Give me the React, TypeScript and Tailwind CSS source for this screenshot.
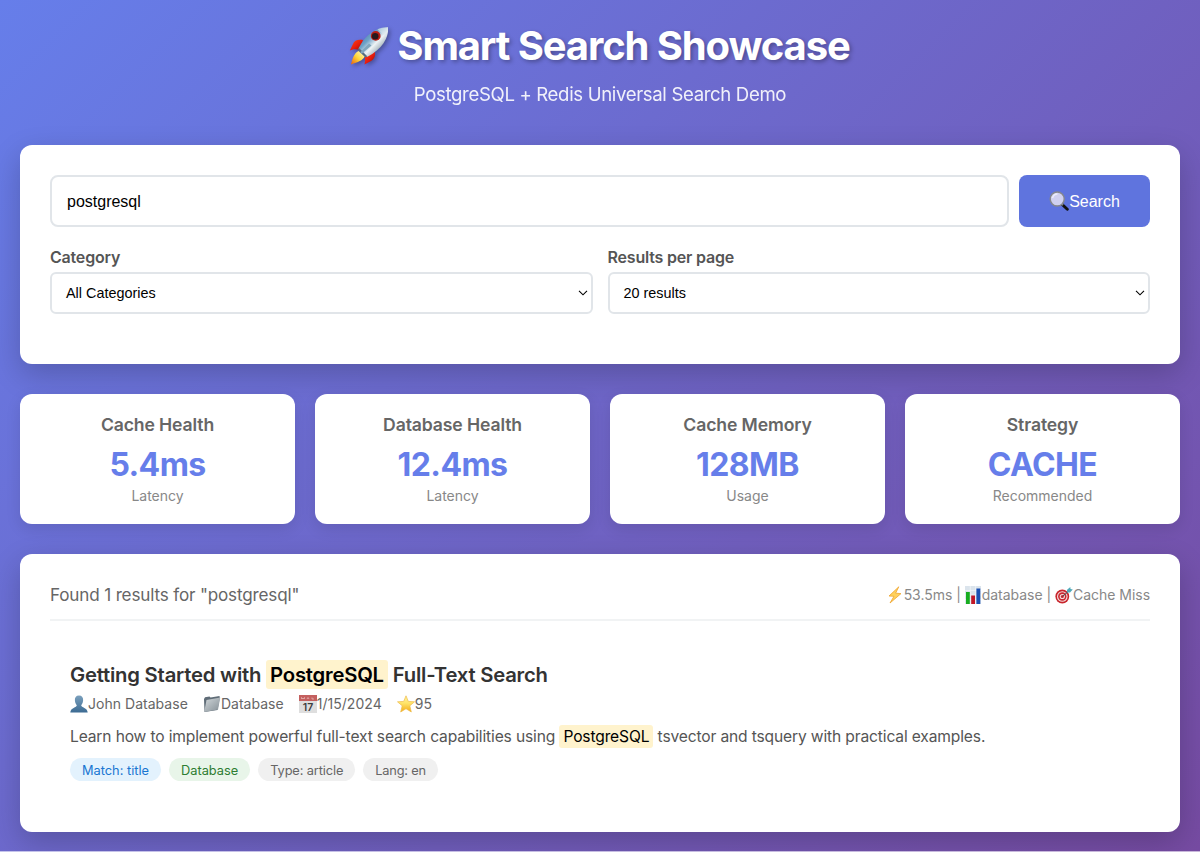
import React from "react";

type IconProps = { className?: string };

function Rocket({ className }: IconProps) {
  return (
    <svg viewBox="0 0 40 40" className={className}>
      <defs>
        <linearGradient id="rk-body" x1="0" y1="0" x2="1" y2="1">
          <stop offset="0" stopColor="#2f6396" />
          <stop offset=".38" stopColor="#6fa3c8" />
          <stop offset=".56" stopColor="#eef3f5" />
          <stop offset=".72" stopColor="#a9b7bf" />
          <stop offset="1" stopColor="#4d5f6c" />
        </linearGradient>
        <linearGradient id="rk-fire" x1="1" y1="0" x2="0" y2="1">
          <stop offset="0" stopColor="#fffbd0" />
          <stop offset=".5" stopColor="#ffd83a" />
          <stop offset="1" stopColor="#e85f0c" />
        </linearGradient>
        <linearGradient id="rk-fin" x1="0" y1="0" x2="1" y2="1">
          <stop offset="0" stopColor="#ff4a1c" />
          <stop offset=".55" stopColor="#e61b0e" />
          <stop offset="1" stopColor="#7d1010" />
        </linearGradient>
      </defs>
      <path d="M14 14 C9 13 5 14.500 4 18 L.8 24.500 C5 22.500 8 23 11 24 Z" fill="url(#rk-fin)" />
      <path d="M25.500 25 C27 29 25.500 33 22 35 L15.500 38.500 C16.500 34 16 31.500 15.200 29 Z" fill="url(#rk-fin)" />
      <path d="M39 1.200 C40 12 33 23 18 31 C14 30 11 27 9.500 22.500 C16 9 26 1.500 39 1.200 Z" fill="url(#rk-body)" />
      <path d="M39 1.200 C34 1.200 31 2 28.500 3.300 L37 11 C38.500 8 39.300 5 39 1.200Z" fill="#dce8ec" opacity=".6" />
      <path d="M10 22 L18.500 30.600 L15.500 31.500 L8.800 25Z" fill="#586e80" />
      <path d="M9.500 25 L15.500 30.500 C14 34.500 9 36 2 38.500 C3 34 5 27 9.500 25 Z" fill="url(#rk-fire)" />
      <circle cx="26.700" cy="9.900" r="4.900" fill="#b71c14" />
      <circle cx="26.200" cy="10.200" r="3.300" fill="#26181c" />
      <path d="M20 17.500 L22.500 19.500 L12.500 28 L11.500 26 Z" fill="#7fa6bd" />
    </svg>
  );
}

function Magnifier({ className }: IconProps) {
  return (
    <svg viewBox="0 0 20 20" className={className}>
      <path d="M13.500 13.800 L18.300 18.300" stroke="#111" strokeWidth="2.900" strokeLinecap="round" />
      <path d="M12.200 12.500 L14 14.200" stroke="#8a8a8a" strokeWidth="1.800" />
      <circle cx="8.200" cy="8" r="7" fill="#cfd0f0" stroke="#85878c" strokeWidth="1.400" />
      <path d="M3.600 7.200 A5 5 0 0 1 8.400 3" fill="none" stroke="#eceefb" strokeWidth="1.400" />
    </svg>
  );
}

function Bolt({ className }: IconProps) {
  return (
    <svg viewBox="0 0 14 18" className={className}>
      <path d="M10.800 .8 L1 10 L6 10.300 L2 17 L13 7.600 L7.600 7.200 Z" fill="#ffd15c" stroke="#efa52f" strokeWidth=".8" strokeLinejoin="round" />
    </svg>
  );
}

function Chart({ className }: IconProps) {
  return (
    <svg viewBox="0 0 16 18" className={className}>
      <rect width="16" height="18" fill="#dbe4ec" />
      <path d="M0 4.500H16M0 9H16M0 13.500H16M5.300 0V18M10.600 0V18" stroke="#f6f9fb" strokeWidth=".6" />
      <rect x="1" y="6" width="3.800" height="12" fill="#18ad20" />
      <rect x="6.200" y="9.500" width="3.800" height="8.500" fill="#c21727" />
      <rect x="11.400" y="2.500" width="3.900" height="15.500" fill="#1c51b3" />
    </svg>
  );
}

function Target({ className }: IconProps) {
  return (
    <svg viewBox="0 0 18 18" className={className}>
      <circle cx="7.300" cy="10.500" r="6.900" fill="#c9252c" />
      <circle cx="7.300" cy="10.500" r="5.300" fill="#f1dedd" />
      <circle cx="7.300" cy="10.500" r="4.200" fill="#cb2831" />
      <circle cx="7.300" cy="10.500" r="2.600" fill="#f3dfde" />
      <circle cx="7.300" cy="10.500" r="1.500" fill="#c9252c" />
      <path d="M7.300 10.500 L14 5" stroke="#4b5358" strokeWidth="1" />
      <path d="M11.800 6.500 L12.100 3.700 L15.300 1 L15.500 3 L17.800 3.500 L15 6.600 Z" fill="#4fa9b9" />
    </svg>
  );
}

function Person({ className }: IconProps) {
  return (
    <svg viewBox="0 0 18 18" className={className}>
      <defs>
        <linearGradient id="ps" x1="0" y1="0" x2="0" y2="1">
          <stop offset="0" stopColor="#7ba0bd" />
          <stop offset="1" stopColor="#3c6b93" />
        </linearGradient>
      </defs>
      <path d="M9 .5 C12 .5 13.400 2.600 13.100 5.500 C12.900 8 11.800 9.300 11.200 10.200 C11.200 12.500 17.500 12.500 17.700 17.500 H.3 C.5 12.500 6.800 12.500 6.800 10.200 C6.200 9.300 5.100 8 4.900 5.500 C4.600 2.600 6 .5 9 .5Z" fill="url(#ps)" />
    </svg>
  );
}

function Folder({ className }: IconProps) {
  return (
    <svg viewBox="0 0 18 18" className={className}>
      <defs>
        <linearGradient id="fd" x1="0" y1="0" x2="1" y2="1">
          <stop offset="0" stopColor="#d2d8db" />
          <stop offset="1" stopColor="#848e95" />
        </linearGradient>
      </defs>
      <path d="M1 4 L2 2.200 L6.500 1.500 L7.500 2.600 L16.500 1 L16.800 3 L14.500 15 L1.500 17 Z" fill="#5f6c77" />
      <path d="M3.500 5 L17.300 2.600 L15 14.600 L1.200 17 Z" fill="url(#fd)" />
    </svg>
  );
}

function CalendarIcon({ className }: IconProps) {
  return (
    <svg viewBox="0 0 18 18" className={className}>
      <rect width="18" height="18" fill="#dedede" />
      <rect width="18" height="6" fill="#c4605f" />
      <path d="M2.500 4V2.500L4 4L5.500 2.500V4M8 4L9 2.500L10 4M13 2.500V4H15" stroke="#edc3c2" strokeWidth=".7" fill="none" />
      <text x="9" y="15.800" textAnchor="middle" fontSize="10.500" fontWeight="600" fontFamily="Inter" fill="#3d3d3d">17</text>
    </svg>
  );
}

function Star({ className }: IconProps) {
  return (
    <svg viewBox="0 0 18 18" className={className}>
      <defs>
        <linearGradient id="st" x1="0" y1="0" x2="0" y2="1">
          <stop offset="0" stopColor="#fff0a0" />
          <stop offset=".45" stopColor="#ffe56b" />
          <stop offset="1" stopColor="#f3ab17" />
        </linearGradient>
      </defs>
      <path d="M9 .8 L11.300 6.400 L17.500 6.800 L12.800 10.800 L14.300 17 L9 13.700 L3.700 17 L5.200 10.800 L.5 6.800 L6.700 6.400Z" fill="url(#st)" stroke="#eebb4b" strokeWidth=".7" strokeLinejoin="round" />
    </svg>
  );
}

function Chevron({ className }: IconProps) {
  return (
    <svg viewBox="0 0 10 6" className={className}>
      <path d="M1 .8 L5 4.800 L9 .8" fill="none" stroke="#000" strokeWidth="1.100" />
    </svg>
  );
}

function SelectField({ label, value }: { label: string; value: string }) {
  return (
    <div className="flex flex-1 flex-col">
      <label className="h-[25px] text-base leading-[27px] font-semibold tracking-[-0.200px] text-[#555]">{label}</label>
      <button className="mt-[3px] flex h-[41.500px] items-center justify-between rounded-md border-2 border-[#e1e5e9] bg-white pr-[3px] pl-[14px] font-['Liberation_Sans',sans-serif] text-[14.400px] text-black">
        <span className="pt-[2px]">{value}</span>
        <Chevron className="h-[6px] w-[10px]" />
      </button>
    </div>
  );
}

const stats = [
  { title: "Cache Health", value: "5.4ms", note: "Latency" },
  { title: "Database Health", value: "12.4ms", note: "Latency" },
  { title: "Cache Memory", value: "128MB", note: "Usage" },
  { title: "Strategy", value: "CACHE", note: "Recommended" },
];

export default function App() {
  return (
    <div className="h-[852px] overflow-hidden border-b border-white/60 bg-[linear-gradient(135deg,#667eea_0%,#764ba2_100%)] bg-[length:100%_852px] px-5 font-['Inter',sans-serif] text-[#333]">
      <header className="flex h-[145px] flex-col items-center pt-[14px] text-white">
        <h1 className="flex h-16 items-center text-[40px] leading-[64px] font-bold whitespace-nowrap tracking-[-1.120px] [text-shadow:2px_2px_4px_rgba(0,0,0,0.3)]">
          <Rocket className="mr-2 h-10 w-10 drop-shadow-[2px_2px_2px_rgba(0,0,0,0.3)]" />
          <span className="pr-px">Smart Search Showcase</span>
        </h1>
        <p className="mt-px text-[18.600px] leading-[31px] tracking-[-0.350px] whitespace-nowrap opacity-90">PostgreSQL + Redis Universal Search Demo</p>
      </header>

      <section className="h-[218.500px] rounded-xl bg-white p-[30px] shadow-[0_10px_30px_rgba(0,0,0,0.2)]">
        <div className="flex h-[52px] gap-[10px] font-['Liberation_Sans',sans-serif] text-base">
          <input readOnly value="postgresql" className="min-w-0 flex-1 rounded-lg border-2 border-[#e1e5e9] px-[15px] pt-[2px] text-black outline-none" />
          <button className="flex w-[131px] items-center justify-center rounded-lg bg-[#5f74de] text-white">
            <Magnifier className="h-5 w-5" />
            <span className="pt-[2px]">Search</span>
          </button>
        </div>
        <div className="mt-[17px] flex gap-[15px]">
          <SelectField label="Category" value="All Categories" />
          <SelectField label="Results per page" value="20 results" />
        </div>
      </section>

      <section className="mt-[30px] grid h-[130.500px] grid-cols-4 gap-5">
        {stats.map((s) => (
          <div key={s.title} className="flex flex-col items-center rounded-xl bg-white pt-[17px] shadow-[0_5px_15px_rgba(0,0,0,0.1)]">
            <h3 className="text-[17.600px] leading-[28px] font-semibold tracking-[-0.120px] text-[#666]">{s.title}</h3>
            <div className="h-[50px] text-[32px] leading-[52px] font-bold tracking-[-0.600px] text-[#667eea]">{s.value}</div>
            <div className="text-[14px] leading-[13px] text-[#888]">{s.note}</div>
          </div>
        ))}
      </section>

      <section className="mt-[30px] h-[277.500px] rounded-xl bg-white px-[30px] pt-[27px] shadow-[0_10px_30px_rgba(0,0,0,0.2)]">
        <div className="flex h-[40px] items-start justify-between border-b-2 border-[#f1f3f4]">
          <div className="text-[17.100px] leading-[28px] tracking-[-0.160px] text-[#666]">Found 1 results for "postgresql"</div>
          <div className="flex items-center text-[14px] leading-[28px] whitespace-pre tracking-[-0.030px] text-[#888]">
            <Bolt className="mr-[2px] h-[18px] w-[14px]" />
            <span>53.5ms | </span>
            <Chart className="mr-[1px] h-[18px] w-[16px]" />
            <span>database | </span>
            <Target className="h-[18px] w-[18px]" />
            <span>Cache Miss</span>
          </div>
        </div>
        <article className="px-5 pt-[37px]">
          <h2 className="text-[20.300px] leading-[33px] font-semibold tracking-[-0.220px] whitespace-pre text-[#333]">
            Getting Started with <mark className="rounded-[3px] bg-[#fff3cd] px-1 py-0.5 text-black">PostgreSQL</mark> Full-Text Search
          </h2>
          <div className="flex h-[26px] gap-[15px] text-[14px] leading-[26px] tracking-[0.030px] text-[#666]">
            <span className="flex items-center"><Person className="h-[18px] w-[18px]" />John Database</span>
            <span className="flex items-center"><Folder className="h-[18px] w-[18px]" />Database</span>
            <span className="flex items-center"><CalendarIcon className="h-[18px] w-[18px]" />1/15/2024</span>
            <span className="flex items-center"><Star className="h-[18px] w-[18px]" />95</span>
          </div>
          <p className="mt-[7px] text-[15.600px] leading-[26px] tracking-[-0.150px] whitespace-pre text-[#555]">
            Learn how to implement powerful full-text search capabilities using <mark className="rounded-[3px] bg-[#fff3cd] px-1 py-0.5 text-black">PostgreSQL</mark> tsvector and tsquery with practical examples.
          </p>
          <div className="mt-[8px] flex gap-2 text-[12.800px] leading-[21px]">
            <span className="rounded-full bg-[#e3f2fd] px-3 pt-[2px] text-[#1976d2]">Match: title</span>
            <span className="rounded-full bg-[#e8f5e9] px-3 pt-[2px] text-[#2e7d32]">Database</span>
            <span className="rounded-full bg-[#f0f0f0] px-3 pt-[2px] tracking-[-0.120px] text-[#666]">Type: article</span>
            <span className="rounded-full bg-[#f0f0f0] px-3 pt-[2px] tracking-[-0.200px] text-[#666]">Lang: en</span>
          </div>
        </article>
      </section>
    </div>
  );
}
